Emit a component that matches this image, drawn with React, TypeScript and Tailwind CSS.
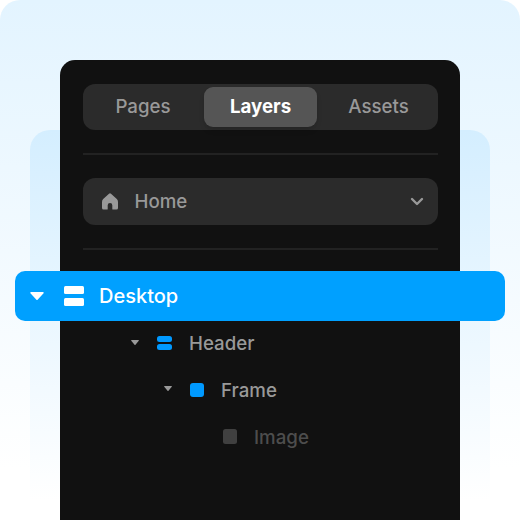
import React from "react";

function Caret({ className }: { className: string }) {
  return (
    <svg viewBox="0 0 14 8" preserveAspectRatio="none" className={className} fill="currentColor" aria-hidden="true">
      <path d="M1 0h12a.8.8 0 0 1 .6 1.3L7.8 7.6a1 1 0 0 1-1.6 0L.4 1.3A.8.8 0 0 1 1 0Z" />
    </svg>
  );
}

function Divider() {
  return <div className="h-[2px] bg-[#222222]" />;
}

function HomeIcon() {
  return (
    <svg width="16" height="17" viewBox="0 0 16 17" fill="currentColor" aria-hidden="true">
      <path d="M7 .7a1.5 1.5 0 0 1 2 0l5.8 5.4A4 4 0 0 1 16 9v6a1.5 1.5 0 0 1-1.5 1.5h-3.7a.5.5 0 0 1-.5-.5v-3.7a2.3 2.3 0 0 0-4.6 0V16a.5.5 0 0 1-.5.5H1.5A1.5 1.5 0 0 1 0 15V9a4 4 0 0 1 1.2-2.9Z" />
    </svg>
  );
}

export default function App() {
  return (
    <div className="relative h-[520px] w-[520px] overflow-hidden bg-white">
      <div className="flex h-full flex-col rounded-t-[20px] bg-linear-to-b from-[#e3f4ff] to-white to-90% pt-[60px] font-['Inter',sans-serif] text-[18.7px] font-medium text-[#999999]">
        <div className="absolute top-[130px] left-[30px] h-[390px] w-[460px] rounded-t-[20px] bg-linear-to-b from-[#d4eeff] to-white to-95%" />
        <main className="relative mx-[60px] flex flex-1 flex-col rounded-t-[15px] bg-[#111111] pt-[23.5px] pr-[22px] pl-[23px]">
          <nav className="flex h-[46.5px] shrink-0 items-center rounded-[12px] bg-[#2b2b2b]">
            <span className="w-[120px] text-center">Pages</span>
            <span className="ml-px flex h-[40px] w-[113px] items-center justify-center rounded-[9px] bg-[#555555] font-bold text-white shadow-md">
              Layers
            </span>
            <span className="flex-1 pl-0.5 text-center">Assets</span>
          </nav>
          <div className="mt-[23px]"><Divider /></div>
          <div className="mt-[23px] flex h-[46.5px] shrink-0 items-center rounded-[12px] bg-[#2b2b2b] pr-[14px] pl-[18.5px]">
            <HomeIcon />
            <span className="ml-[17px] flex-1 pt-px">Home</span>
            <svg width="14" height="9" viewBox="0 0 14 9" fill="none" stroke="currentColor" strokeWidth="2.4" strokeLinecap="round" strokeLinejoin="round">
              <path d="m2 2 5 5 5-5" />
            </svg>
          </div>
          <div className="mt-[23px]"><Divider /></div>
          <div className="mt-[21.5px] mr-[-67px] ml-[-68px] flex h-[50px] shrink-0 items-center rounded-[10px] bg-[#00a0ff] pl-[15px] text-[20px] text-white">
            <Caret className="h-2 w-3.5" />
            <span className="ml-5 flex w-5 flex-col gap-1">
              <i className="h-2 rounded-[1.5px] bg-white" />
              <i className="h-2 rounded-[1.5px] bg-white" />
            </span>
            <span className="ml-[15px]">Desktop</span>
          </div>
          <div className="mt-[-1px] flex h-[46.5px] items-center pl-[48px]">
            <Caret className="mt-[-2px] h-[5px] w-[8px]" />
            <span className="ml-[18px] flex w-[14.5px] flex-col gap-[2px]">
              <i className="h-[6px] rounded-[2.5px] bg-[#0099ff]" />
              <i className="h-[6px] rounded-[2.5px] bg-[#0099ff]" />
            </span>
            <span className="ml-[17.5px] pt-0.5">Header</span>
          </div>
          <div className="flex h-[46.5px] items-center pl-[80.5px]">
            <Caret className="mt-[-2px] h-[5px] w-[8px]" />
            <i className="ml-[18px] size-[14.5px] rounded-[3px] bg-[#0099ff]" />
            <span className="ml-[17px] pt-0.5">Frame</span>
          </div>
          <div className="flex h-[46.5px] items-center pl-[139.5px]">
            <i className="size-[14.5px] rounded-[2.5px] bg-[#404040]" />
            <span className="ml-[17px] pt-[3px] text-[#4d4d4d]">Image</span>
          </div>
        </main>
      </div>
    </div>
  );
}
